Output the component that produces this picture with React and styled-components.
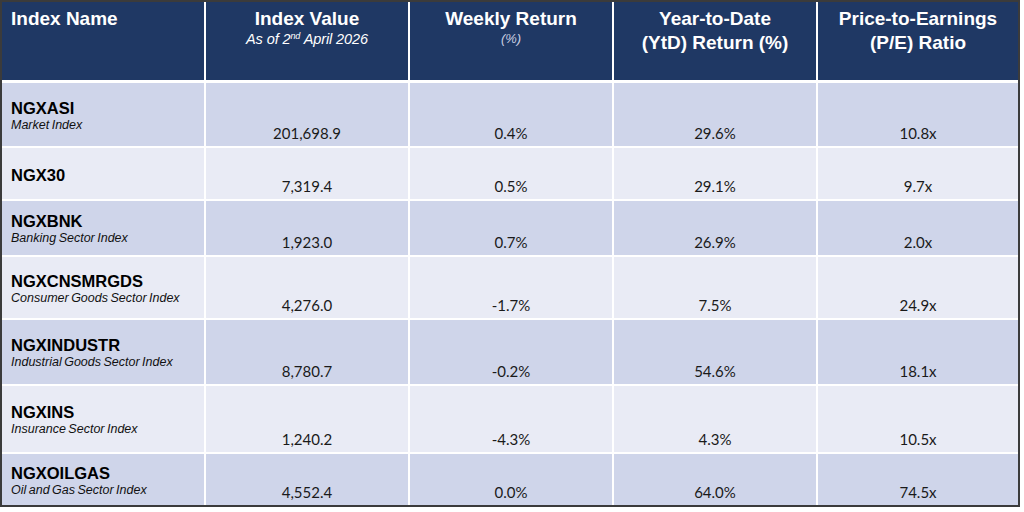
import React from "react";
import styled, { createGlobalStyle } from "styled-components";

const Global = createGlobalStyle`
  html, body { margin: 0; padding: 0; background: #ffffff; }
  body { font-family: "Liberation Sans", Arial, sans-serif; }
`;

const Table = styled.div`
  width: 1020px;
  box-sizing: border-box;
  border: 2px solid #3b3b3b;
  background: #ffffff;
  display: flex;
  flex-direction: column;
  gap: 2px;
`;

const Row = styled.div`
  display: grid;
  grid-template-columns: 202px 202px 202px 202px 1fr;
  column-gap: 2px;
  height: ${(p) => p.$h}px;
`;

const HeaderRow = styled(Row)`
  margin-bottom: 1px;
`;

const HeadCell = styled.div`
  background: #1f3864;
  color: #ffffff;
  padding: 5px 9px 0;
  text-align: ${(p) => (p.$left ? "left" : "center")};
  font-family: "Liberation Sans", Arial, sans-serif;
`;

const HeadTitle = styled.div`
  font-weight: 700;
  font-size: 19px;
  line-height: 24px;
`;

const HeadSub = styled.div`
  font-style: italic;
  font-size: ${(p) => (p.$small ? "13px" : "14.5px")};
  line-height: 16px;
  letter-spacing: -0.1px;
  color: ${(p) => (p.$small ? "#c9cee0" : "#ffffff")};
  sup { font-size: 9px; line-height: 0; vertical-align: 5px; }
`;

const NameCell = styled.div`
  background: ${(p) => (p.$dark ? "#cfd5ea" : "#e9ebf5")};
  padding: 4px 9px 0;
  display: flex;
  flex-direction: column;
  justify-content: center;
  color: #000000;
`;

const Code = styled.div`
  font-weight: 700;
  font-size: 16.5px;
  line-height: 17px;
`;

const Desc = styled.div`
  font-style: italic;
  font-size: 12.5px;
  line-height: 17px;
  word-spacing: -1px;
  color: #111111;
`;

const ValueCell = styled.div`
  background: ${(p) => (p.$dark ? "#cfd5ea" : "#e9ebf5")};
  display: flex;
  align-items: flex-end;
  justify-content: center;
  padding-bottom: 4px;
  font-family: Lato, "Open Sans", sans-serif;
  font-size: 15px;
  line-height: 18px;
  color: #1a1a1a;
`;

const rows = [
  ["NGXASI", "Market Index", "201,698.9", "0.4%", "29.6%", "10.8x", 63],
  ["NGX30", "", "7,319.4", "0.5%", "29.1%", "9.7x", 51],
  ["NGXBNK", "Banking Sector Index", "1,923.0", "0.7%", "26.9%", "2.0x", 54],
  ["NGXCNSMRGDS", "Consumer Goods Sector Index", "4,276.0", "-1.7%", "7.5%", "24.9x", 61],
  ["NGXINDUSTR", "Industrial Goods Sector Index", "8,780.7", "-0.2%", "54.6%", "18.1x", 64],
  ["NGXINS", "Insurance Sector Index", "1,240.2", "-4.3%", "4.3%", "10.5x", 66],
  ["NGXOILGAS", "Oil and Gas Sector Index", "4,552.4", "0.0%", "64.0%", "74.5x", 51],
];

export default function App() {
  return (
    <>
      <Global />
      <Table>
        <HeaderRow $h={78}>
          <HeadCell $left>
            <HeadTitle>Index Name</HeadTitle>
          </HeadCell>
          <HeadCell>
            <HeadTitle>Index Value</HeadTitle>
            <HeadSub>
              As of 2<sup>nd</sup> April 2026
            </HeadSub>
          </HeadCell>
          <HeadCell>
            <HeadTitle>Weekly Return</HeadTitle>
            <HeadSub $small>(%)</HeadSub>
          </HeadCell>
          <HeadCell>
            <HeadTitle>Year-to-Date</HeadTitle>
            <HeadTitle>(YtD) Return (%)</HeadTitle>
          </HeadCell>
          <HeadCell>
            <HeadTitle>Price-to-Earnings</HeadTitle>
            <HeadTitle>(P/E) Ratio</HeadTitle>
          </HeadCell>
        </HeaderRow>
        {rows.map(([code, desc, v, w, y, pe, h], i) => {
          const dark = i % 2 === 0;
          return (
            <Row key={code} $h={h}>
              <NameCell $dark={dark}>
                <Code>{code}</Code>
                {desc && <Desc>{desc}</Desc>}
              </NameCell>
              <ValueCell $dark={dark}>{v}</ValueCell>
              <ValueCell $dark={dark}>{w}</ValueCell>
              <ValueCell $dark={dark}>{y}</ValueCell>
              <ValueCell $dark={dark}>{pe}</ValueCell>
            </Row>
          );
        })}
      </Table>
    </>
  );
}
